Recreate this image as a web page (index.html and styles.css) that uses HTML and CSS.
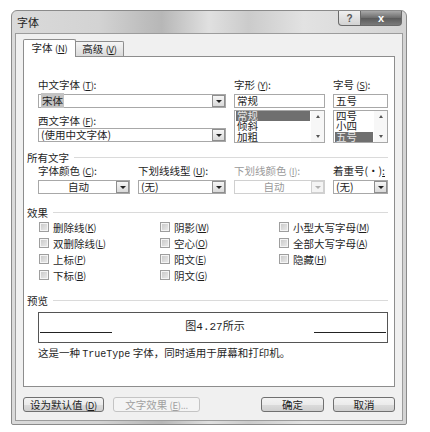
FILE: index.html
```html
<!DOCTYPE html>
<html lang="zh-CN">

<head>
  <meta charset="UTF-8">
  <title>字体</title>
  <link rel="stylesheet" href="styles.css">
</head>

<body>
  <div class="window">
    <div class="titlebar">
      <span class="title">字体</span>
      <div class="caption-btns">
        <span class="cap-btn help">?</span>
        <span class="cap-btn close">x</span>
      </div>
    </div>

    <div class="client">
      <div class="tabs">
        <span class="tab active">字体 <span class="key">(<u>N</u>)</span></span>
        <span class="tab">高级 <span class="key">(<u>V</u>)</span></span>
      </div>

      <div class="panel">
        <!-- 字体 / 字形 / 字号 -->
        <div class="field-grid">
          <div class="col-face">
            <label class="lbl">中文字体 <span class="key">(<u>T</u>)</span>:</label>
            <div class="combo"><span class="combo-text"><span class="selected-text">宋体</span></span><span class="arrow"></span></div>
            <label class="lbl lbl-gap">西文字体 <span class="key">(<u>F</u>)</span>:</label>
            <div class="combo"><span class="combo-text">(使用中文字体)</span><span class="arrow"></span></div>
          </div>

          <div>
            <label class="lbl">字形 <span class="key">(<u>Y</u>)</span>:</label>
            <div class="textbox">常规</div>
            <div class="listbox">
              <div class="items">
                <div class="item selected">常规</div>
                <div class="item">倾斜</div>
                <div class="item">加粗</div>
              </div>
              <div class="scroll"><span class="up"></span><span class="down"></span></div>
            </div>
          </div>

          <div>
            <label class="lbl">字号 <span class="key">(<u>S</u>)</span>:</label>
            <div class="textbox">五号</div>
            <div class="listbox">
              <div class="items">
                <div class="item">四号</div>
                <div class="item">小四</div>
                <div class="item selected">五号</div>
              </div>
              <div class="scroll"><span class="up"></span><span class="down"></span></div>
            </div>
          </div>
        </div>

        <div class="group-title group-all">所有文字</div>
        <div class="field-grid">
          <div>
            <label class="lbl">字体颜色 <span class="key">(<u>C</u>)</span>:</label>
            <div class="combo"><span class="combo-text center">自动</span><span class="arrow"></span></div>
          </div>
          <div>
            <label class="lbl">下划线线型 <span class="key">(<u>U</u>)</span>:</label>
            <div class="combo"><span class="combo-text">(无)</span><span class="arrow"></span></div>
          </div>
          <div>
            <label class="lbl disabled">下划线颜色 <span class="key">(<u>I</u>)</span>:</label>
            <div class="combo disabled"><span class="combo-text center">自动</span><span class="arrow"></span></div>
          </div>
          <div>
            <label class="lbl">着重号(·)<u>:</u></label>
            <div class="combo"><span class="combo-text">(无)</span><span class="arrow"></span></div>
          </div>
        </div>

        <div class="group-title group-effects">效果</div>
        <div class="checks">
          <div class="check"><span class="box"></span>删除线 <span class="key">(<u>K</u>)</span></div>
          <div class="check"><span class="box"></span>双删除线 <span class="key">(<u>L</u>)</span></div>
          <div class="check"><span class="box"></span>上标 <span class="key">(<u>P</u>)</span></div>
          <div class="check"><span class="box"></span>下标 <span class="key">(<u>B</u>)</span></div>
          <div class="check"><span class="box"></span>阴影 <span class="key">(<u>W</u>)</span></div>
          <div class="check"><span class="box"></span>空心 <span class="key">(<u>O</u>)</span></div>
          <div class="check"><span class="box"></span>阳文 <span class="key">(<u>E</u>)</span></div>
          <div class="check"><span class="box"></span>阴文 <span class="key">(<u>G</u>)</span></div>
          <div class="check"><span class="box"></span>小型大写字母 <span class="key">(<u>M</u>)</span></div>
          <div class="check"><span class="box"></span>全部大写字母 <span class="key">(<u>A</u>)</span></div>
          <div class="check"><span class="box"></span>隐藏 <span class="key">(<u>H</u>)</span></div>
        </div>

        <div class="group-title group-preview">预览</div>
        <div class="preview">
          <span class="rule"></span>
          <span class="preview-text">图4.27所示</span>
          <span class="rule"></span>
        </div>
        <p class="note">这是一种 <span class="mono">TrueType</span> 字体，同时适用于屏幕和打印机。</p>
      </div>

      <div class="buttons">
        <span class="btn btn-default">设为默认值 <span class="key">(<u>D</u>)</span></span>
        <span class="btn btn-effects disabled">文字效果 <span class="key">(<u>E</u>)...</span></span>
        <span class="spacer"></span>
        <span class="btn btn-ok">确定</span>
        <span class="btn btn-cancel">取消</span>
      </div>
    </div>
  </div>
</body>

</html>
```

FILE: styles.css
```css
* {
  margin: 0;
  padding: 0;
  box-sizing: border-box;
}

body {
  background: #fff;
  font-family: "Noto Sans CJK SC", "Liberation Sans", sans-serif;
  font-size: 10.5px;
  line-height: 13px;
  color: #1e1e1e;
}

u {
  text-decoration: underline;
}

.key {
  font-size: 9.5px;
  letter-spacing: -0.3px;
}

/* 窗口外框 */
.window {
  width: 396px;
  height: 415px;
  margin: 10px 0 0 11px;
  padding: 0 3px 3px;
  display: flex;
  flex-direction: column;
  border: 1px solid #8a8a8a;
  border-radius: 6px 6px 2px 2px;
  background: linear-gradient(90deg, #dadada 0%, #d3d3d3 22%, #bdbdbd 34%, #b7b7b7 38%, #e0e0e0 50%, #cbcbcb 60%, #e2e2e2 74%, #d4d4d4 100%);
}

.titlebar {
  height: 22px;
  display: flex;
  align-items: center;
  padding-left: 2px;
}

.title {
  flex: 1;
  font-size: 11px;
}

.caption-btns {
  display: flex;
  align-self: flex-start;
  margin-right: 1px;
}

.cap-btn {
  height: 15px;
  display: flex;
  align-items: center;
  justify-content: center;
  border: 1px solid #6a6a6a;
  border-top: none;
  font-family: "Liberation Sans", sans-serif;
  font-weight: 700;
}

.cap-btn.help {
  width: 23px;
  border-radius: 0 0 0 4px;
  background: linear-gradient(#f0f0f0, #d2d2d2);
  color: #555;
  font-size: 10px;
}

.cap-btn.close {
  width: 41px;
  border-left: none;
  border-radius: 0 0 4px 0;
  background: linear-gradient(#a8a8a8, #6c6c6c 50%, #5a5a5a 51%, #7a7a7a);
  color: #fff;
  font-size: 11px;
}

/* 客户区 */
.client {
  flex: 1;
  display: flex;
  flex-direction: column;
  padding: 5px 7px 0;
  background: #f0f0f0;
  border: 1px solid #9c9c9c;
}

.tabs {
  display: flex;
  align-items: flex-end;
  height: 17px;
}

.tab {
  height: 15px;
  width: 48px;
  text-align: center;
  line-height: 14px;
  border: 1px solid #8d8d8d;
  border-left: none;
  border-bottom: none;
  border-radius: 0 2px 0 0;
  background: linear-gradient(#f5f5f5, #dadada);
}

.tab.active {
  position: relative;
  z-index: 1;
  width: 53px;
  height: 18px;
  margin-bottom: -1px;
  line-height: 16px;
  border-left: 1px solid #8d8d8d;
  border-radius: 2px 2px 0 0;
  background: #fff;
}

.panel {
  height: 331px;
  padding: 21px 6px 0 3px;
  background: #fff;
  border: 1px solid #8d8d8d;
}

/* 字段网格 */
.field-grid {
  display: grid;
  grid-template-columns: 92px 88px 91px 55px;
  column-gap: 8px;
  margin-left: 11px;
}

.col-face {
  grid-column: span 2;
}

.lbl {
  display: block;
  white-space: nowrap;
  height: 13px;
  margin-bottom: 3px;
}

.lbl-gap {
  margin-top: 6px;
  margin-bottom: 1px;
}

.lbl.disabled {
  color: #9a9a9a;
}

.combo {
  display: flex;
  height: 14px;
  border: 1px solid #a8a8a8;
  background: #fff;
}

.combo-text {
  flex: 1;
  padding-left: 2px;
  line-height: 12px;
  white-space: nowrap;
}

.combo-text.center {
  text-align: center;
}

.selected-text {
  background: #c3c3c3;
  padding: 0 1px;
}

.arrow {
  width: 13px;
  height: 12px;
  display: flex;
  align-items: center;
  justify-content: center;
  border: 1px solid #8e8e8e;
  background: linear-gradient(#f6f6f6, #d9d9d9);
}

.arrow::after {
  content: '';
  border-left: 3px solid transparent;
  border-right: 3px solid transparent;
  border-top: 3px solid #222;
}

.combo.disabled {
  border-color: #d0d0d0;
  color: #9a9a9a;
}

.combo.disabled .arrow {
  border-color: #d0d0d0;
  background: #f4f4f4;
}

.combo.disabled .arrow::after {
  border-top-color: #b0b0b0;
}

.textbox {
  height: 14px;
  padding-left: 2px;
  line-height: 12px;
  border: 1px solid #a8a8a8;
}

.listbox {
  display: flex;
  height: 33px;
  margin-top: 2px;
  border: 1px solid #a8a8a8;
}

.items {
  flex: 1;
  padding: 0 1px;
  font-size: 10.5px;
}

.item {
  height: 10.3px;
  line-height: 10.3px;
  padding-left: 1px;
}

.item.selected {
  background: #6f6f6f;
  color: #e8e8e8;
}

.scroll {
  width: 13px;
  display: flex;
  flex-direction: column;
  justify-content: space-between;
  align-items: center;
  padding: 4px 0;
  background: #f7f7f7;
}

.scroll .up {
  border-left: 2px solid transparent;
  border-right: 2px solid transparent;
  border-bottom: 3px solid #555;
}

.scroll .down {
  border-left: 2px solid transparent;
  border-right: 2px solid transparent;
  border-top: 3px solid #555;
}

/* 分组标题 */
.group-title {
  display: flex;
  align-items: center;
  height: 13px;
}

.group-title::after {
  content: '';
  flex: 1;
  margin-left: 5px;
  border-top: 1px solid #dadada;
}

.group-all {
  margin-top: 8px;
}

.group-effects {
  margin-top: 12px;
}

.group-preview {
  margin-top: 11px;
}

/* 效果复选框 */
.checks {
  display: grid;
  grid-template-columns: 121px 119px 1fr;
  grid-template-rows: repeat(4, 16px);
  grid-auto-flow: column;
  margin-left: 11px;
}

.check {
  display: flex;
  align-items: center;
  white-space: nowrap;
}

.box {
  width: 10px;
  height: 10px;
  margin: 0 4px 0 1px;
  border: 1px solid #9e9e9e;
  background: linear-gradient(135deg, #c6c6c6, #ececec);
  box-shadow: inset 0 0 0 1px #f4f4f4;
}

/* 预览 */
.preview {
  display: flex;
  align-items: center;
  height: 31px;
  margin: 5px 0 0 11px;
  padding: 0 1px;
  border: 1px solid #555;
}

.rule {
  width: 72px;
  height: 20px;
  align-self: flex-start;
  border-bottom: 1px solid #222;
}

.preview-text {
  flex: 1;
  text-align: center;
  font-family: "Liberation Mono", "Noto Sans CJK SC", monospace;
  font-size: 11px;
  padding-left: 4px;
}

.note {
  margin: 3px 0 0 11px;
  white-space: nowrap;
}

.mono {
  font-family: "Liberation Mono", monospace;
  font-size: 10px;
}

/* 底部按钮 */
.buttons {
  display: flex;
  gap: 9px;
  margin-top: 10px;
}

.spacer {
  flex: 1;
}

.btn {
  height: 15px;
  line-height: 13px;
  text-align: center;
  white-space: nowrap;
  border: 1px solid #707070;
  border-radius: 3px;
  background: linear-gradient(#f3f3f3 0%, #ebebeb 50%, #dcdcdc 51%, #cfcfcf 100%);
}

.btn-default {
  width: 81px;
}

.btn-effects {
  width: 87px;
}

.btn.disabled {
  color: #a0a0a0;
  border-color: #c4c4c4;
  background: #f4f4f4;
}

.btn-ok {
  width: 63px;
}

.btn-cancel {
  width: 62px;
}
```
